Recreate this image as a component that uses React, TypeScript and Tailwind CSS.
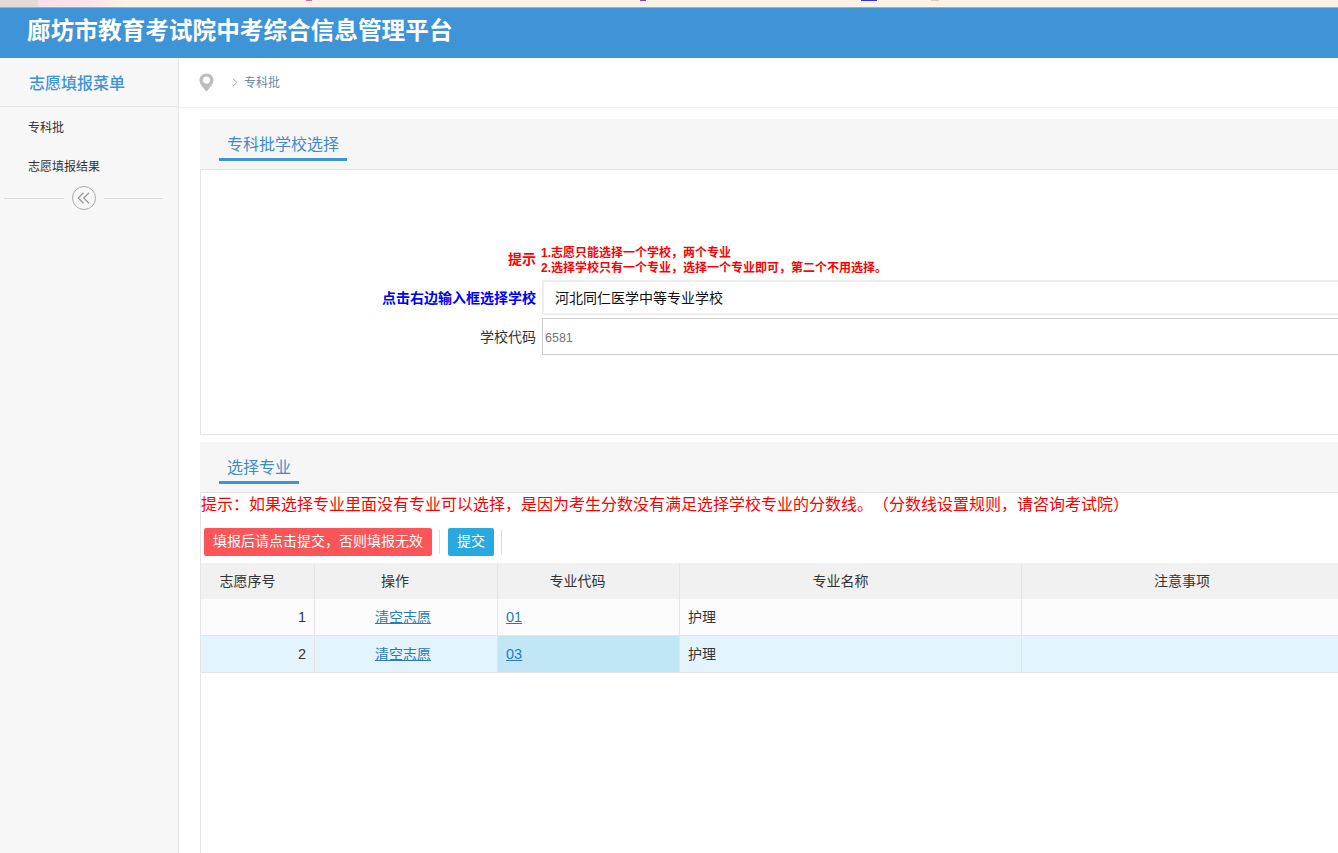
import React from "react";

function PinIcon() {
  return (
    <svg width="15" height="19" viewBox="0 0 15 19">
      <path
        fillRule="evenodd"
        d="M7.5 0.5C3.4 0.5 0.5 3.4 0.5 7.2C0.5 11.2 4.8 15.6 7.5 18.5C10.2 15.6 14.5 11.2 14.5 7.2C14.5 3.4 11.6 0.5 7.5 0.5ZM7.5 3.4C9.6 3.4 11.2 5 11.2 7.1C11.2 9.2 9.6 10.8 7.5 10.8C5.4 10.8 3.8 9.2 3.8 7.1C3.8 5 5.4 3.4 7.5 3.4Z"
        fill="#bdbdbd"
      />
    </svg>
  );
}

function CollapseIcon() {
  return (
    <svg width="14" height="12" viewBox="0 0 14 12" fill="none" stroke="#999999" strokeWidth="1.2">
      <path d="M6.5 0.8L1.2 6L6.5 11.2" />
      <path d="M12 0.8L6.7 6L12 11.2" />
    </svg>
  );
}

function SectionHead(prop: { title: string; underline: string }) {
  return (
    <div className="h-[50px] bg-[#f6f6f6] pl-[19px] pt-[10px]">
      <div className={`${prop.underline} h-[32px] border-b-[3px] border-[#3e94d6] pl-[8px] text-[16px] leading-[31px] text-[#3e8ad0]`}>
        {prop.title}
      </div>
    </div>
  );
}

const rows = [
  { no: 1, code: "01", name: "护理", bg: "bg-[#fcfcfc]", codeBg: "" },
  { no: 2, code: "03", name: "护理", bg: "bg-[#e3f4fc]", codeBg: "bg-[#c1e6f6]" },
];

export default function App() {
  return (
    <div className="h-[853px] w-[1338px] overflow-hidden bg-white font-['Liberation_Sans','Noto_Sans_CJK_SC',sans-serif] text-[14px] text-[#333333] [text-spacing-trim:space-all]">
      {/* sliver of the browser page above */}
      <div className="relative h-[8px] border-b border-[#c9a28e] bg-[linear-gradient(90deg,#e3dbd8_0,#e3dbd8_37px,#f8e2ea_39px,#fbe3ea_90px,#fff1e6_125px)]">
        <div className="absolute left-[306px] top-0 h-[1px] w-[6px] bg-[#e8609a]" />
        <div className="absolute left-[640px] top-0 h-[1px] w-[6px] bg-[#7a3fd0]" />
        <div className="absolute left-[861px] top-0 h-[1px] w-[16px] bg-[#3333dd]" />
        <div className="absolute left-[931px] top-0 h-[1px] w-[8px] bg-[#d0cccc]" />
      </div>

      <header className="flex h-[50px] items-start bg-[#3e94d6] pl-[27px] text-[23.65px] font-bold leading-[46px] text-white">
        廊坊市教育考试院中考综合信息管理平台
      </header>

      <div className="flex h-[795px]">
        <aside className="w-[179px] shrink-0 border-r border-[#e6e6e6] bg-[#f7f7f7]">
          <div className="h-[49px] border-b border-[#e4e4e4] pl-[29px] text-[16px] font-medium leading-[52px] text-[#3e94d6]">
            志愿填报菜单
          </div>
          <div className="pl-[28px] text-[12px] text-[#333333]">
            <div className="h-[39px] leading-[42px]">专科批</div>
            <div className="h-[39px] leading-[42px]">志愿填报结果</div>
          </div>
          <div className="mt-px flex items-center pl-[4px]">
            <div className="h-px w-[60px] bg-[#dddddd]" />
            <div className="mx-[8px] flex h-[24px] w-[24px] items-center justify-center rounded-full border border-[#aaaaaa]">
              <CollapseIcon />
            </div>
            <div className="h-px w-[59px] bg-[#dddddd]" />
          </div>
        </aside>

        <main className="min-w-0 flex-1">
          <div className="flex h-[50px] items-center border-b border-[#eeeeee] pl-[20px]">
            <PinIcon />
            <svg className="ml-[18px]" width="6" height="9" viewBox="0 0 6 9" fill="none" stroke="#aaaaaa">
              <path d="M1 0.8L5 4.5L1 8.2" />
            </svg>
            <span className="ml-[6px] text-[12px] text-[#6f8ba3]">专科批</span>
          </div>

          <div className="pl-[21px] pt-[11px]">
            <SectionHead title="专科批学校选择" underline="w-[128px]" />
            <div className="h-[266px] border-b border-l border-t border-[#e5e5e5] pt-[74px]">
              <div className="mb-[5px] flex h-[31px] items-center">
                <div className="w-[340px] shrink-0 pr-[5px] text-right font-bold text-[#ff0000]">提示</div>
                <div className="pt-[2px] text-[12px] font-bold leading-[15px] text-[#ff0000]">
                  <div>1.志愿只能选择一个学校，两个专业</div>
                  <div>2.选择学校只有一个专业，选择一个专业即可，第二个不用选择。</div>
                </div>
              </div>
              <div className="flex h-[36px] items-start">
                <div className="w-[341px] shrink-0 pr-[6px] text-right font-bold leading-[36px] text-[#0000ff]">点击右边输入框选择学校</div>
                <div className="h-[35px] w-[900px] shrink-0 border-2 border-[#eeeeee] pl-[11px] leading-[32px] text-[#111111]">
                  河北同仁医学中等专业学校
                </div>
              </div>
              <div className="mt-[2px] flex h-[38px] items-start">
                <div className="w-[341px] shrink-0 pr-[6px] text-right leading-[38px]">学校代码</div>
                <div className="h-[37px] w-[900px] shrink-0 border border-[#cccccc] pl-[2px] text-[12.5px] leading-[38px] text-[#777777]">
                  6581
                </div>
              </div>
            </div>

            <div className="mt-[7px]">
              <SectionHead title="选择专业" underline="w-[80px]" />
            </div>
            <div className="h-[361px] border-l border-t border-[#e5e5e5]">
              <div className="h-[25px] text-[16px] leading-[24px] text-[#ff0000]">
                提示：如果选择专业里面没有专业可以选择，是因为考生分数没有满足选择学校专业的分数线。（分数线设置规则，请咨询考试院）
              </div>
              <div className="flex h-[45px] items-center pl-[3px] pt-[2px]">
                <button className="h-[28px] w-[228px] rounded-[2px] bg-[#fb5557] text-white">
                  填报后请点击提交，否则填报无效
                </button>
                <div className="ml-[7px] h-[24px] w-px bg-[#dddddd]" />
                <button className="ml-[8px] h-[28px] w-[46px] rounded-[2px] bg-[#28a9e0] text-white">提交</button>
                <div className="ml-[7px] h-[24px] w-px bg-[#dddddd]" />
              </div>
              <div className="w-[1150px]">
                <div className="grid h-[36px] grid-cols-[114px_183px_182px_342px_329px] bg-[#f1f1f1] leading-[36px]">
                  <div className="border-r border-[#e5e5e5] pr-[20px] text-center">志愿序号</div>
                  <div className="border-r border-[#e5e5e5] pr-[22px] text-center">操作</div>
                  <div className="border-r border-[#e5e5e5] pr-[22px] text-center">专业代码</div>
                  <div className="border-r border-[#e5e5e5] pr-[20px] text-center">专业名称</div>
                  <div className="pr-[9px] text-center">注意事项</div>
                </div>
                {rows.map((r) => (
                  <div
                    key={r.no}
                    className={`grid h-[37px] grid-cols-[114px_183px_182px_342px_329px] border-b border-[#e5e5e5] leading-[36px] ${r.bg}`}
                  >
                    <div className="border-r border-[#e5e5e5] pr-[8px] text-right text-[14.5px]">{r.no}</div>
                    <div className="border-r border-[#e5e5e5] pr-[6px] text-center text-[#2a7ab8] underline">清空志愿</div>
                    <div className={`border-r border-[#e5e5e5] pl-[8px] text-[14.5px] text-[#2a7ab8] underline ${r.codeBg}`}>{r.code}</div>
                    <div className="border-r border-[#e5e5e5] pl-[8px]">{r.name}</div>
                    <div />
                  </div>
                ))}
              </div>
            </div>
          </div>
        </main>
      </div>
    </div>
  );
}
